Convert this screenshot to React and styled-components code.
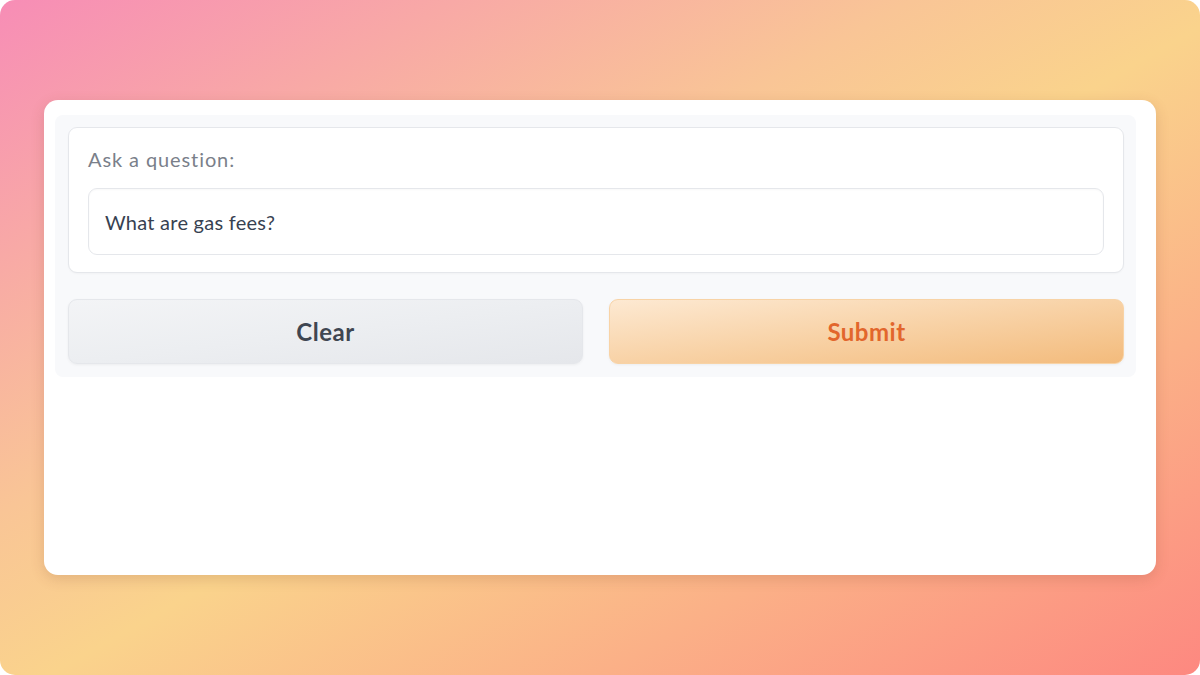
import React from "react";
import styled, { createGlobalStyle } from "styled-components";

const Global = createGlobalStyle`
  html, body { margin: 0; padding: 0; background: #ffffff; }
  * { box-sizing: border-box; }
`;

const Frame = styled.div`
  width: 1200px;
  height: 675px;
  border-radius: 15px;
  overflow: hidden;
  background: linear-gradient(to bottom right, #f78db6 0%, #f9c596 38%, #fad38c 52%, #fbb087 75%, #fd8880 100%);
  padding: 100px 44px;
  font-family: Lato, "Noto Sans", sans-serif;
`;

const Card = styled.div`
  height: 475px;
  background: #ffffff;
  border-radius: 14px;
  box-shadow: 0 4px 14px rgba(120, 60, 40, 0.18);
  padding: 15px 20px 0 11px;
`;

const Block = styled.div`
  background: #f8f9fb;
  border-radius: 8px;
  padding: 12px 12px 13px 13px;
  display: flex;
  flex-direction: column;
  gap: 26px;
`;

const Panel = styled.div`
  background: #ffffff;
  border: 1px solid #e5e7eb;
  border-radius: 9px;
  padding: 18px 19px 17px 19px;
  display: flex;
  flex-direction: column;
  gap: 16px;
  box-shadow: 0 1px 2px rgba(0,0,0,0.03);
`;

const Label = styled.div`
  font-size: 20px;
  line-height: 26px;
  color: #7a7f8a;
  letter-spacing: 0.9px;
`;

const Input = styled.div`
  height: 67px;
  border: 1px solid #e5e7eb;
  border-radius: 9px;
  padding: 0 16px;
  display: flex;
  align-items: center;
  font-size: 20px;
  letter-spacing: 0.25px;
  color: #374151;
  box-shadow: inset 0 1px 2px rgba(0,0,0,0.03);
`;

const Row = styled.div`
  display: grid;
  grid-template-columns: 1fr 1fr;
  gap: 26px;
`;

const Button = styled.div`
  height: 65px;
  border-radius: 9px;
  display: flex;
  align-items: center;
  justify-content: center;
  font-size: 24px;
  font-weight: 700;
  letter-spacing: 0.5px;
  border: 1px solid ${p => (p.$primary ? "#f8d3a6" : "#e5e7eb")};
  color: ${p => (p.$primary ? "#e2662c" : "#3f4651")};
  background: ${p =>
    p.$primary
      ? "linear-gradient(to bottom right, #fde9d2 0%, #f8d2a6 50%, #f3bb7c 100%)"
      : "linear-gradient(to bottom right, #f3f4f6 0%, #eceef1 50%, #e5e7eb 100%)"};
  box-shadow: 0 1px 3px rgba(0,0,0,0.05);
`;

export default function App() {
  return (
    <>
      <Global />
      <Frame>
        <Card>
          <Block>
            <Panel>
              <Label>Ask a question:</Label>
              <Input>What are gas fees?</Input>
            </Panel>
            <Row>
              <Button>Clear</Button>
              <Button $primary>Submit</Button>
            </Row>
          </Block>
        </Card>
      </Frame>
    </>
  );
}
